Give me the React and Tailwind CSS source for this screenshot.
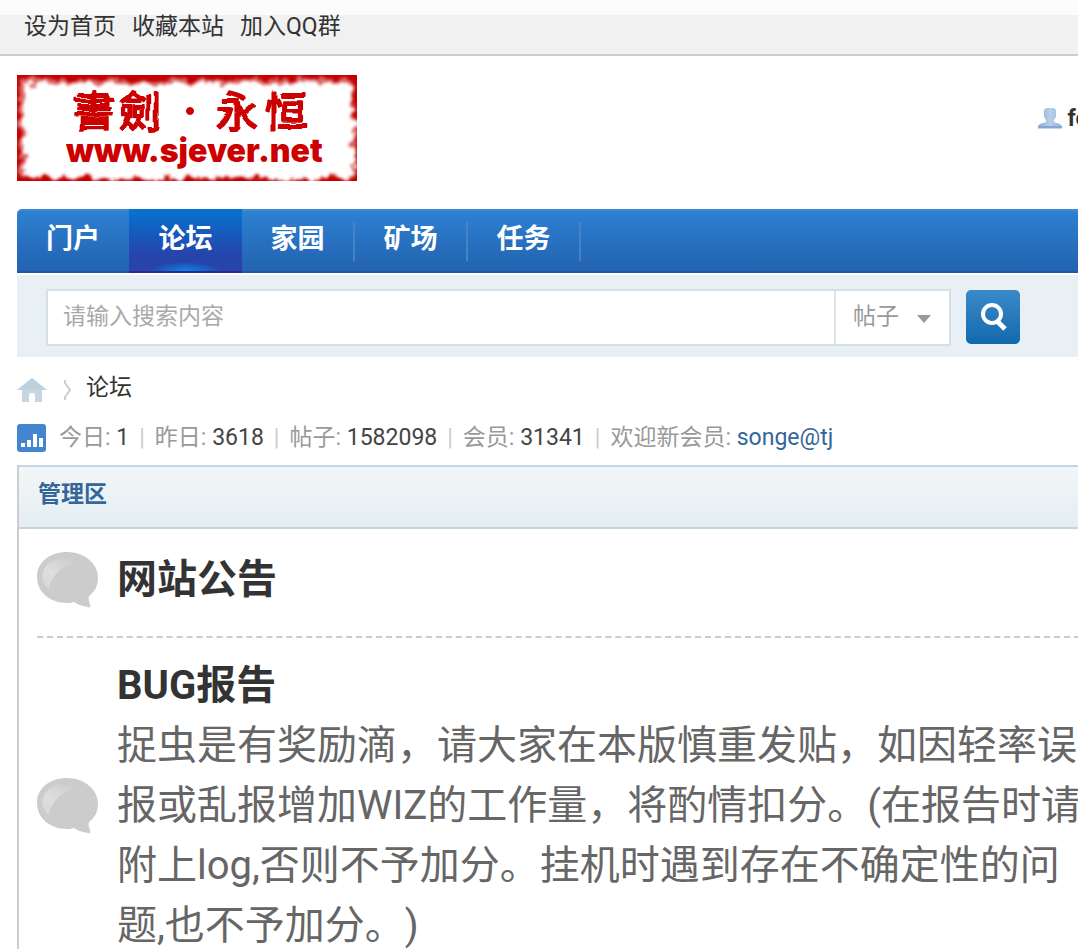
import { useState } from "react";

const topLinks = ["设为首页", "收藏本站", "加入QQ群"];

const navItems = [
  { label: "门户" },
  { label: "论坛", active: true },
  { label: "家园", divider: true },
  { label: "矿场", divider: true },
  { label: "任务", divider: true },
];

const stats = [
  { label: "今日", value: "1" },
  { label: "昨日", value: "3618" },
  { label: "帖子", value: "1582098" },
  { label: "会员", value: "31341" },
];

const boards = [
  { name: "网站公告" },
  {
    name: "BUG报告",
    description:
      "捉虫是有奖励滴，请大家在本版慎重发贴，如因轻率误报或乱报增加WIZ的工作量，将酌情扣分。(在报告时请附上log,否则不予加分。挂机时遇到存在不确定性的问题,也不予加分。)",
  },
];

function Logo() {
  return (
    <svg width="340" height="106" viewBox="0 0 340 106" role="img" aria-label="書劍·永恒">
      <defs>
        <filter id="rough" x="-5%" y="-10%" width="110%" height="120%">
          <feTurbulence type="fractalNoise" baseFrequency="0.09" numOctaves="4" seed="8" result="noise" />
          <feDisplacementMap in="SourceGraphic" in2="noise" scale="16" xChannelSelector="R" yChannelSelector="G" />
          <feGaussianBlur stdDeviation="1.8" />
        </filter>
        <filter id="brush" x="-5%" y="-10%" width="110%" height="120%">
          <feTurbulence type="fractalNoise" baseFrequency="0.06" numOctaves="1" seed="3" result="noise" />
          <feDisplacementMap in="SourceGraphic" in2="noise" scale="6" xChannelSelector="R" yChannelSelector="G" />
        </filter>
      </defs>
      <rect width="340" height="106" fill="#c40000" />
      <rect x="3" y="4" width="334" height="99" rx="6" fill="#fff" fillOpacity="0.4" filter="url(#rough)" />
      <rect x="7" y="8" width="328" height="94" rx="6" fill="#fff" filter="url(#rough)" />
      <rect x="15" y="16" width="310" height="78" fill="#fff" />
      <g fill="#cc0000" stroke="#cc0000">
        <g
          fontFamily="'Noto Sans CJK TC', sans-serif"
          fontWeight="400"
          fontSize="42"
          strokeWidth="2"
          strokeLinejoin="round"
          filter="url(#brush)"
        >
          <text x="56" y="52">書</text>
          <text x="102" y="52">劍</text>
          <text x="199" y="52">永</text>
          <text x="248" y="52">恒</text>
        </g>
        <circle cx="173" cy="36" r="3.500" />
        <text x="49" y="87" fontFamily="Inter, sans-serif" fontWeight="900" fontSize="32" strokeWidth="0">
          www.sjever.net
        </text>
      </g>
    </svg>
  );
}

function UserIcon() {
  return (
    <svg width="24" height="22" viewBox="0 0 24 22" aria-hidden="true">
      <defs>
        <linearGradient id="user" x1="0" y1="0" x2="1" y2="0">
          <stop offset="0" stopColor="#86add6" />
          <stop offset="0.5" stopColor="#b9d0e6" />
          <stop offset="1" stopColor="#93b7dc" />
        </linearGradient>
      </defs>
      <path d="M8 0h8l2 2v7l-2 3v2l6 2 2 2v3H0v-3l2-2 6-2v-2L6 9V2z" fill="url(#user)" />
      <path d="M0 18h24v2H0z" fill="#82a9d5" />
      <path d="M0 20h24v1H0z" fill="#c3d7ec" />
    </svg>
  );
}

function HomeIcon() {
  return (
    <svg width="30" height="24" viewBox="0 0 30 24" aria-hidden="true">
      <path d="M15 0 30 12h-5v12h-7v-7q0-2-3-2t-3 2v7H5V12H0z" fill="#c5d7e3" />
      <path d="M15 0 30 12H0z" fill="#b5cad6" fillOpacity="0.5" />
    </svg>
  );
}

function ChartIcon() {
  return (
    <svg width="30" height="28" viewBox="0 0 30 28" aria-hidden="true">
      <rect width="29" height="28" rx="3" fill="#4385d0" />
      <path d="M4 19h4v4H4zM10 16h4v7h-4zM16 10h4v13h-4zM22 14h4v9h-4z" fill="#fff" />
    </svg>
  );
}

function BubbleIcon() {
  return (
    <svg className="shrink-0" width="61" height="56" viewBox="0 0 61 56" aria-hidden="true">
      <defs>
        <linearGradient id="shine" x1="0.8" y1="0" x2="0.2" y2="1">
          <stop offset="0" stopColor="#cbcbcb" />
          <stop offset="0.6" stopColor="#dedede" />
          <stop offset="1" stopColor="#d8d8d8" />
        </linearGradient>
      </defs>
      <path
        d="M30 0C47 0 61 11 61 26c0 9-4 14-9 18-1 3 0 5 1 8s0 4-2 3c-6-1-9-2-14-5-3 1-5 1-7 1C13 51 0 40 0 25S13 0 30 0z"
        fill="#cccccc"
      />
      <path d="M12 37C2 29 4 15 15 9 24 4 37 5 43 10 28 11 15 21 12 37z" fill="url(#shine)" />
    </svg>
  );
}

function SearchBar() {
  const [keyword, setKeyword] = useState("");

  return (
    <form
      className="mt-0.5 flex h-[82px] items-center bg-[#e8eff5] pt-0.5 pr-[90px] pl-[29px]"
      onSubmit={(e) => e.preventDefault()}
    >
      <div className="flex h-[57px] flex-1 border-2 border-[#d3e0e7] bg-white">
        <input
          type="text"
          aria-label="搜索内容"
          placeholder="请输入搜索内容"
          value={keyword}
          onChange={(e) => setKeyword(e.target.value)}
          className="min-w-0 flex-1 px-[15px] outline-none placeholder:text-[#a9a9a9]"
        />
        <div className="relative w-[115px] border-l-2 border-[#dbe4e8]">
          <select
            aria-label="搜索类型"
            className="h-full w-full appearance-none bg-transparent pl-[17px] text-[#999999] outline-none"
          >
            <option>帖子</option>
            <option>用户</option>
          </select>
          <svg className="pointer-events-none absolute top-6 right-[18px]" width="14" height="8" viewBox="0 0 14 8" aria-hidden="true">
            <path d="M0 0h14L7 8z" fill="#999" />
          </svg>
        </div>
      </div>
      <button
        type="submit"
        aria-label="搜索"
        className="ml-[15px] flex h-[54px] w-[54px] items-center justify-center rounded-[5px] bg-linear-to-b from-[#3a8aca] to-[#0f6aab]"
      >
        <svg className="ml-0.5" width="26" height="28" viewBox="0 0 26 28" fill="none" stroke="#fff" aria-hidden="true">
          <circle cx="11" cy="11" r="9" strokeWidth="4" />
          <path d="m15 17 9 9" strokeWidth="5" />
        </svg>
      </button>
    </form>
  );
}

function BoardRow({ board }) {
  return (
    <li className="flex items-center gap-[19px] border-t-2 border-dashed border-[#cdcdcd] pt-[18px] pb-7 first:border-t-0 first:pt-[21px] first:pb-[26px]">
      <BubbleIcon />
      <div className="flex-1 text-[40px] leading-[60px] [text-spacing-trim:space-all]">
        <h3 className="font-bold text-[#333333]">
          <a href="#">{board.name}</a>
        </h3>
        {board.description && <p className="text-[#666666]">{board.description}</p>}
      </div>
    </li>
  );
}

export default function App() {
  return (
    <div className="overflow-hidden bg-white font-[Roboto,'Noto_Sans_CJK_SC',sans-serif] text-[23px] leading-7 text-[#333333]">
      <div className="h-[15px] bg-[#fcfcfc]" />
      <div className="flex h-[41px] gap-4 border-b-2 border-[#cdcdcd] bg-[#f1f1f1] px-6">
        {topLinks.map((link) => (
          <a key={link} href="#" className="h-6 leading-6">
            {link}
          </a>
        ))}
      </div>

      <div className="-mr-8 pl-[17px]">
        <header className="flex justify-between pt-[19px] pr-[22px]">
          <a href="#">
            <Logo />
          </a>
          <a href="#" className="mt-[30px] flex h-7 items-center gap-[6px] font-bold">
            <UserIcon />
            fe
          </a>
        </header>

        <nav className="mt-7 flex h-16 rounded-tl-[5px] border-t-2 border-b-2 border-t-[#3b8ad2] border-b-[#2059a0] bg-linear-to-b from-[#2e80d2] to-[#2263b0] text-[27px] font-bold text-white">
          {navItems.map((item) => (
            <a
              key={item.label}
              href="#"
              className={
                item.active
                  ? "-my-0.5 flex w-[113px] items-center justify-center border-b-2 border-[#2b2a8c] bg-[radial-gradient(ellipse_36px_9px_at_50%_100%,#0a86ee,transparent),linear-gradient(#0573d0,#2644aa_75%)] pb-0.5"
                  : "flex w-[113px] items-center justify-between pb-1 first:w-28"
              }
            >
              <span className="flex-1 text-center">{item.label}</span>
              {item.divider && <span className="mt-1 h-[39px] w-0.5 bg-[#4583c9]" />}
            </a>
          ))}
        </nav>

        <SearchBar />

        <div className="mt-[15px] flex h-8 items-center">
          <a href="#" aria-label="首页" className="pt-1">
            <HomeIcon />
          </a>
          <svg className="mt-1 ml-4" width="10" height="20" viewBox="0 0 10 20" fill="none" stroke="#cdcdcd" strokeWidth="2" aria-hidden="true">
            <path d="M2 0v3l5 7-5 7v3" />
          </svg>
          <a href="#" className="ml-[13px]">
            论坛
          </a>
        </div>

        <div className="mt-[18px] flex h-8 items-center text-[#999999]">
          <ChartIcon />
          <p className="ml-3 flex">
            {stats.map((stat) => (
              <span key={stat.label}>
                {stat.label}: <em className="text-[#444444] not-italic">{stat.value}</em>
                <span className="px-[10px] text-[#cccccc]">|</span>
              </span>
            ))}
            <span>
              欢迎新会员:{" "}
              <a href="#" className="text-[#336699]">
                songe@tj
              </a>
            </span>
          </p>
        </div>

        <section className="mt-[11px] border-2 border-t-[#c2d5e3] border-r-[#cdcdcd] border-b-[#c2d5e3] border-l-[#cdcdcd]">
          <h2 className="h-[62px] border-b-2 border-[#c2d5e3] bg-linear-to-b from-[#f2f6f8] to-[#e5edf1] px-[19px] pt-[14px] font-bold text-[#336699]">
            <a href="#">管理区</a>
          </h2>
          <ul className="px-[18px]">
            {boards.map((board) => (
              <BoardRow key={board.name} board={board} />
            ))}
          </ul>
        </section>
      </div>
    </div>
  );
}
